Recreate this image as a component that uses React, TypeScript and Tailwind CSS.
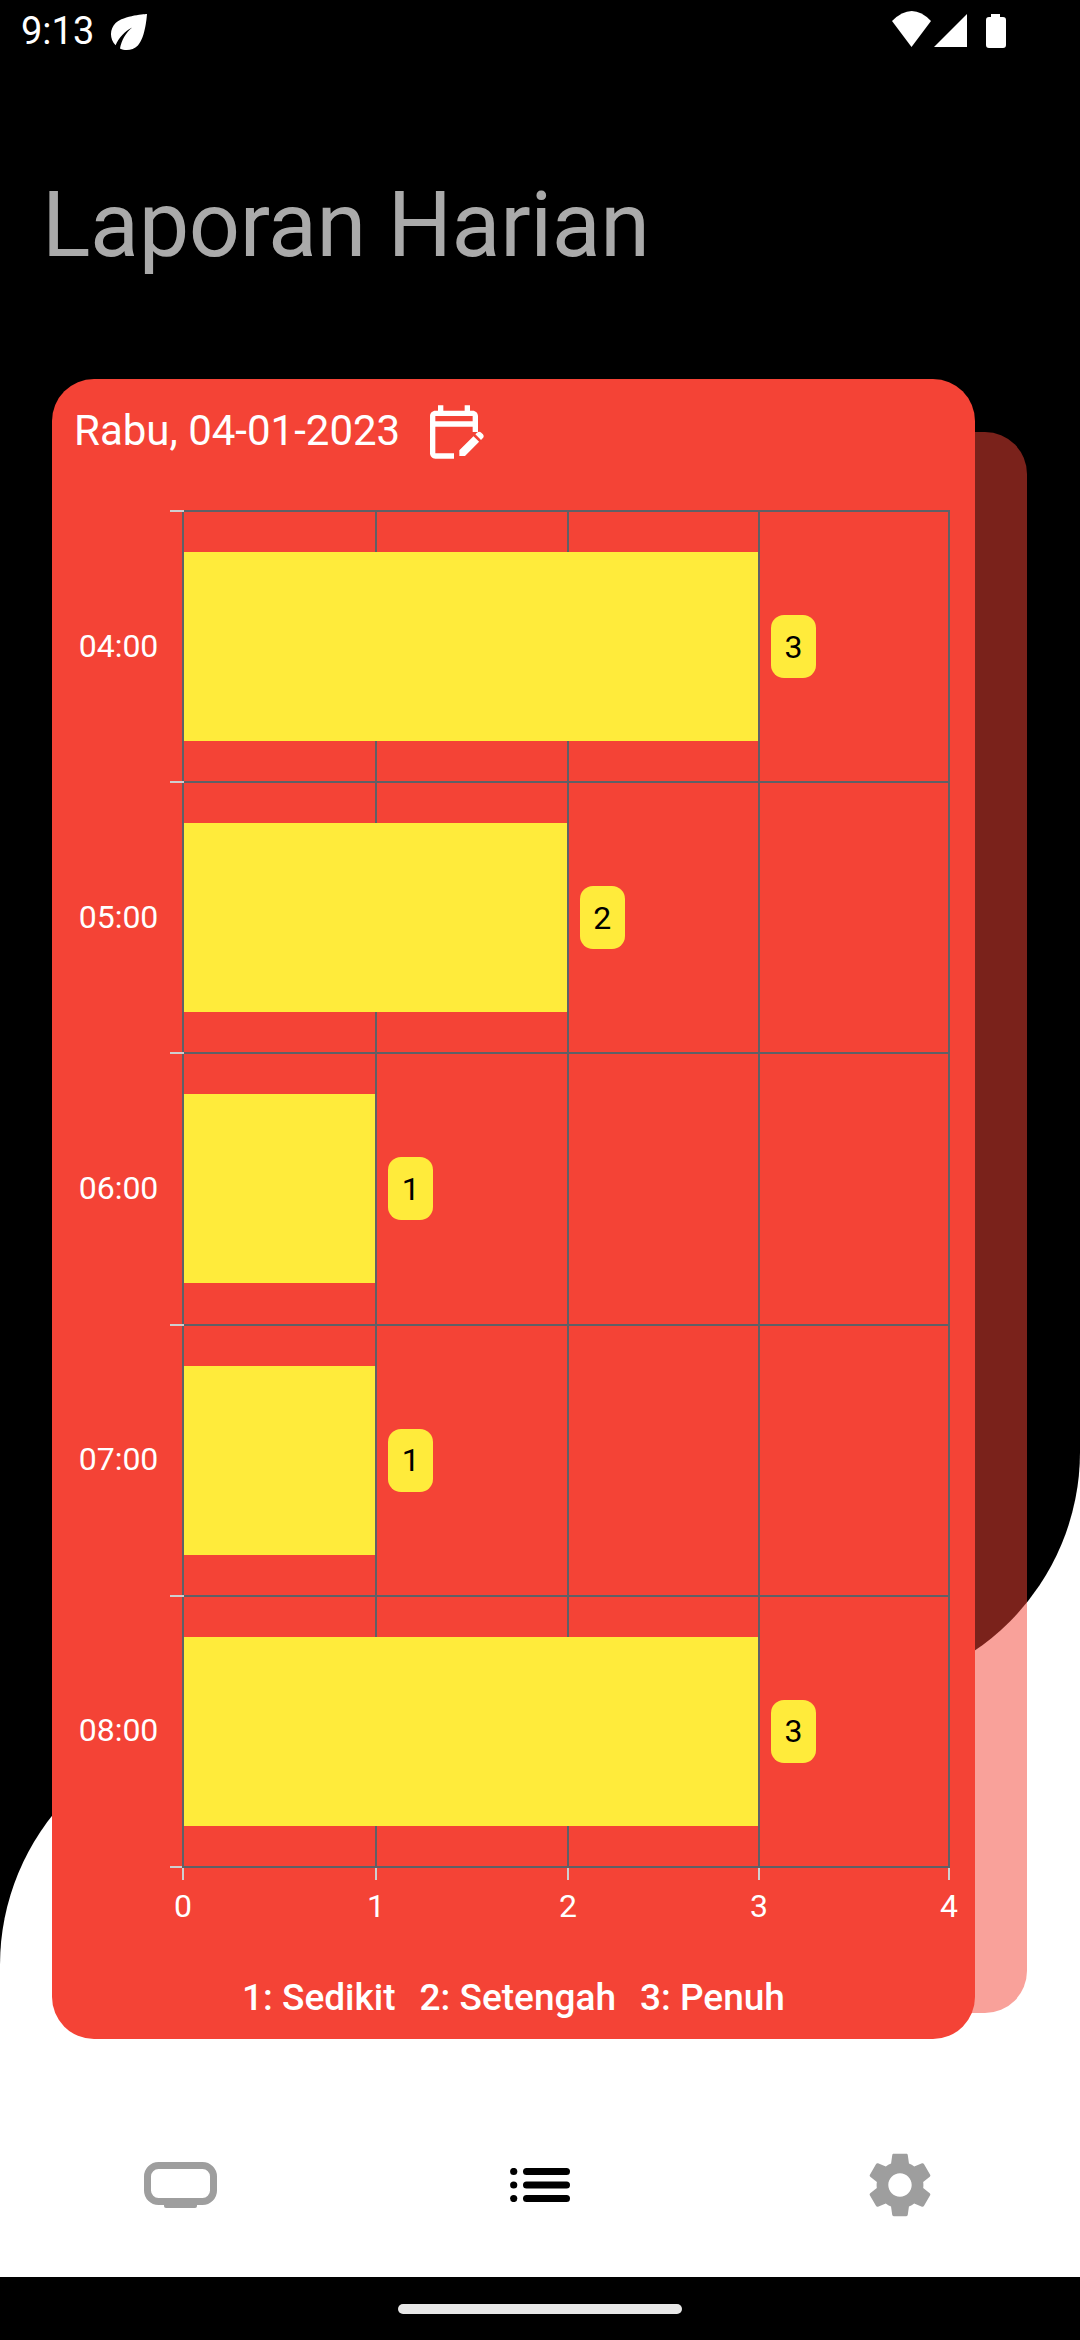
import React from "react";

const rows = [
  { time: "04:00", value: 3 },
  { time: "05:00", value: 2 },
  { time: "06:00", value: 1 },
  { time: "07:00", value: 1 },
  { time: "08:00", value: 3 },
];

const STEP = 191.33;

function StatusBar() {
  return (
    <div className="h-[63px] flex items-start justify-between text-white">
      <div className="flex items-start pl-[21px]">
        <span className="text-[38px] leading-[45px] mt-[9px]">9:13</span>
        <svg viewBox="0 0 24 24" className="w-[54px] h-[54px] mt-[5px] ml-[8px]" fill="#fff">
          <path d="M6.05 8.05c-2.73 2.73-2.73 7.15-.02 9.88 1.47-3.4 4.09-6.24 7.37-7.93-2.78 2.34-4.73 5.61-5.41 9.32 2.6 1.23 5.8.78 7.95-1.37C19.43 14.47 20 4 20 4S9.53 4.57 6.05 8.05z" />
        </svg>
      </div>
      <svg viewBox="0 0 188 63" className="w-[188px] h-[63px]" fill="#fff">
        {/* wifi, signal, battery */}
        <path d="M0 21 Q20 1 39 21 L19.5 47 Z" />
        <path d="M42 47 L75 14 V47 Z" />
        <path d="M99 14 h9 v3 h3 a3 3 0 0 1 3 3 v25 a3 3 0 0 1 -3 3 h-14 a3 3 0 0 1 -3 -3 v-25 a3 3 0 0 1 3 -3 h2 Z" />
      </svg>
    </div>
  );
}

function Chart() {
  return (
    <div className="relative mt-[44px]">
      {/* vertical grid lines */}
      <div className="absolute left-[130px] top-0 w-[768px] h-[1356px] grid grid-cols-[193px_192px_191px_190px] border-l-2 border-[#5f6066]">
        <div className="border-r-2 border-[#5f6066]" />
        <div className="border-r-2 border-[#5f6066]" />
        <div className="border-r-2 border-[#5f6066]" />
        <div className="border-r-2 border-[#5f6066]" />
      </div>

      {rows.map((r) => (
        <div key={r.time} className="relative flex h-[271.2px]">
          <div className="w-[118px] pl-[15px] flex items-center justify-center text-white text-[32px]">{r.time}</div>
          <div className="w-[14px] h-[2px] bg-[#cfcfcf]" />
          <div className="w-[766px] border-t-2 border-[#5f6066] flex items-center">
            <div className="h-[189px] bg-[#ffeb3b]" style={{ width: r.value * STEP }} />
            <div className="ml-[13px] w-[45px] h-[63px] rounded-[13px] bg-[#ffeb3b] flex items-center justify-center text-black text-[32px]">
              {r.value}
            </div>
          </div>
        </div>
      ))}

      {/* x axis */}
      <div className="flex">
        <div className="w-[118px]" />
        <div className="w-[12px] h-[2px] bg-[#cfcfcf]" />
        <div className="w-[768px] border-t-2 border-[#5f6066]">
          <div className="grid grid-cols-[193px_192px_191px_190px_2px]">
            {[0, 1, 2, 3, 4].map((n) => (
              <div key={n} className="w-[2px] flex flex-col items-center">
                <div className="w-[2px] h-[12px] shrink-0 bg-[#cfcfcf]" />
                <span className="text-white text-[32px] leading-[36px] mt-[8px]">{n}</span>
              </div>
            ))}
          </div>
        </div>
      </div>
    </div>
  );
}

export default function App() {
  return (
    <div className="relative w-[1080px] h-[2340px] overflow-hidden bg-white flex flex-col [font-family:Roboto,sans-serif]">
      {/* page background curves */}
      <div className="absolute left-0 top-0 w-full h-[1692px] bg-black rounded-br-[240px]" />
      <div className="absolute left-0 top-[1600px] w-[300px] h-[500px] bg-black" />
      <div className="absolute left-0 top-[1725px] w-[400px] h-[500px] bg-white rounded-tl-[240px]" />

      <div className="relative flex flex-col flex-1">
        <StatusBar />

        <h1 className="mt-[110px] ml-[42px] text-[90px] leading-[105px] font-normal tracking-[-0.4px] text-[#aaaaaa]">Laporan Harian</h1>

        <div className="relative mt-[101px] ml-[52px] w-[923px] h-[1660px]">
          <div className="absolute left-[52px] top-[53px] w-[923px] h-[1581px] rounded-[42px] bg-[#f44336]/50" />

          <div className="relative h-full rounded-[42px] bg-[#f44336] pt-[21px]">
            <div className="flex items-start h-[66px] pl-[22px]">
              <span className="mt-[3px] text-white text-[42px] leading-[56px]">Rabu, 04-01-2023</span>
              <svg viewBox="0 0 24 24" className="w-[64px] h-[64px] ml-[22px]" fill="#fff">
                <path d="M5 10h14v2h2V6c0-1.1-.9-2-2-2h-1V2h-2v2H8V2H6v2H5c-1.1 0-1.99.9-1.99 2L3 20c0 1.1.9 2 2 2h7v-2H5V10zm0-4h14v2H5V6zm17.84 8.28-.71.71-2.12-2.12.71-.71c.39-.39 1.02-.39 1.41 0l.71.71c.39.39.39 1.02 0 1.41zm-3.54-.7 2.12 2.12-5.3 5.3H14v-2.12l5.3-5.3z" />
              </svg>
            </div>

            <Chart />

            <div className="absolute left-0 right-0 bottom-[20px] flex justify-center gap-[24px] text-white text-[37px] leading-[42px] font-medium">
              <span>1: Sedikit</span>
              <span>2: Setengah</span>
              <span>3: Penuh</span>
            </div>
          </div>
        </div>

        {/* bottom nav */}
        <div className="mt-[86px] h-[120px] grid grid-cols-3 items-center justify-items-center">
          <svg viewBox="0 0 73 46" className="w-[73px] h-[46px]">
            <rect x="3.5" y="3.5" width="66" height="36" rx="11" fill="none" stroke="#9e9e9e" strokeWidth="7" />
            <path d="M20 42 H53 V44 a2 2 0 0 1 -2 2 H22 a2 2 0 0 1 -2 -2 Z" fill="#9e9e9e" />
          </svg>
          <svg viewBox="0 0 60 34" className="w-[60px] h-[34px]" fill="#000">
            <circle cx="3.7" cy="3.5" r="3.6" />
            <circle cx="3.7" cy="17" r="3.6" />
            <circle cx="3.7" cy="30.5" r="3.6" />
            <rect x="13" y="0" width="47" height="7" rx="3.5" />
            <rect x="13" y="13.5" width="47" height="7" rx="3.5" />
            <rect x="13" y="27" width="47" height="7" rx="3.5" />
          </svg>
          <svg viewBox="0 0 24 24" className="w-[78px] h-[78px]" fill="#9e9e9e">
            <path d="M19.14 12.94c.04-.3.06-.61.06-.94 0-.32-.02-.64-.07-.94l2.03-1.58c.18-.14.23-.41.12-.61l-1.92-3.32c-.12-.22-.37-.29-.59-.22l-2.39.96c-.5-.38-1.03-.7-1.62-.94l-.36-2.54c-.04-.24-.24-.41-.48-.41h-3.84c-.24 0-.43.17-.47.41l-.36 2.54c-.59.24-1.13.57-1.62.94l-2.39-.96c-.22-.08-.47 0-.59.22L2.74 8.87c-.12.21-.08.47.12.61l2.03 1.58c-.05.3-.09.63-.09.94s.02.64.07.94l-2.03 1.58c-.18.14-.23.41-.12.61l1.92 3.32c.12.22.37.29.59.22l2.39-.96c.5.38 1.03.7 1.62.94l.36 2.54c.05.24.24.41.48.41h3.84c.24 0 .44-.17.47-.41l.36-2.54c.59-.24 1.13-.56 1.62-.94l2.39.96c.22.08.47 0 .59-.22l1.92-3.32c.12-.22.07-.47-.12-.61l-2.01-1.58zM12 15.6c-1.98 0-3.6-1.62-3.6-3.6s1.62-3.6 3.6-3.6 3.6 1.62 3.6 3.6-1.62 3.6-3.6 3.6z" />
          </svg>
        </div>

        {/* gesture bar */}
        <div className="mt-auto h-[63px] bg-black flex items-center justify-center">
          <div className="w-[284px] h-[10px] rounded-full bg-[#e8e8e8]" />
        </div>
      </div>
    </div>
  );
}
